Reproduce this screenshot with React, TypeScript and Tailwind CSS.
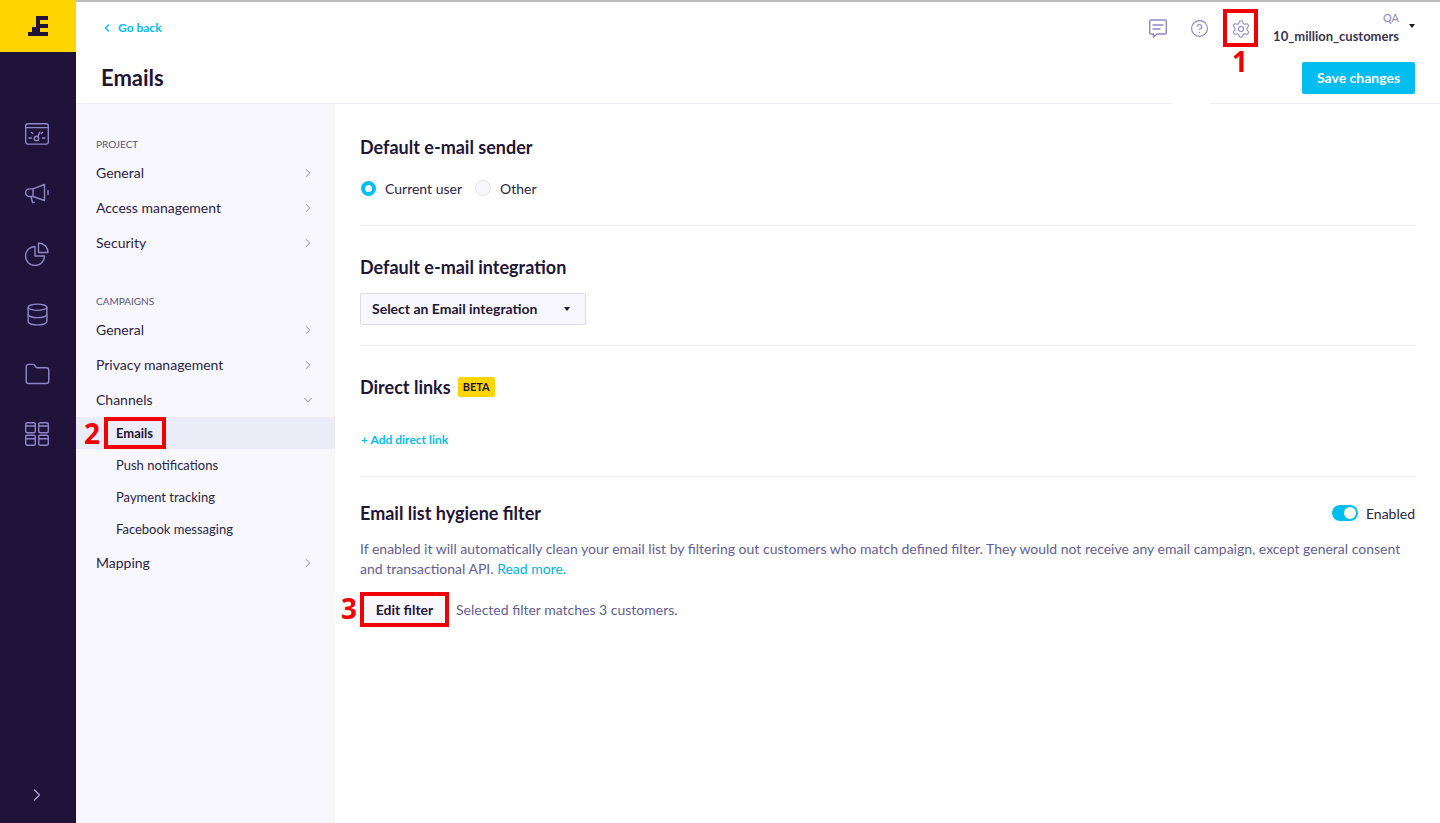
import React from "react";
import { ChevronRight, ChevronDown, ChevronLeft, CircleHelp, Settings, Database, Folder } from "lucide-react";

const RailIcon = ({ children }: { children: React.ReactNode }) => (
  <div className="h-[60px] flex items-center justify-center pr-[2px] text-[#8d86c9]">{children}</div>
);

const NavRow = ({ label, open }: { label: string; open?: boolean }) => (
  <div className="h-[35px] flex items-center justify-between pl-5 pr-[20px] text-[14px] text-[#2b2444]">
    <span>{label}</span>
    {open ? <ChevronDown size={14} strokeWidth={1.8} className="text-[#9a95c4] mt-[1px]" /> : <ChevronRight size={14} strokeWidth={1.8} className="text-[#9a95c4] mt-[1px]" />}
  </div>
);

const SubRow = ({ label }: { label: string }) => (
  <div className="h-8 flex items-center pl-10 pt-[2px] text-[13px] text-[#2b2444]">{label}</div>
);

const Mark = ({ n, className }: { n: string; className: string }) => (
  <span className={`absolute text-[#f00000] font-bold text-[28px] leading-none font-['Open_Sans',sans-serif] ${className}`}>{n}</span>
);

const Section = ({ children, last }: { children: React.ReactNode; last?: boolean }) => (
  <section className={last ? "" : "border-b border-[#e9e8f3]"}>{children}</section>
);

const H2 = ({ children }: { children: React.ReactNode }) => (
  <h2 className="text-[18px] font-bold leading-[24px] text-[#1f1534]">{children}</h2>
);

export default function App() {
  return (
    <div className="w-[1440px] h-[823px] overflow-hidden flex flex-col bg-white font-['Lato',sans-serif] text-[#1f1534]">
      <div className="h-[2px] bg-[#bdbdbd] shrink-0 ml-[76px]" />
      <div className="flex-1 flex min-h-0 -mt-[2px]">
        <aside className="w-[76px] shrink-0 bg-[#20133a] flex flex-col">
          <div className="h-[52px] bg-[#ffd500] flex items-center justify-center">
            <svg width="20" height="20" viewBox="0 0 20 20" fill="#20133a">
              <rect x="8" y="0" width="12" height="4" />
              <rect x="8" y="0" width="4" height="16" />
              <rect x="8" y="8" width="12" height="4" />
              <rect x="4" y="11" width="8" height="5" />
              <rect x="0" y="16" width="20" height="4" />
            </svg>
          </div>
          <div className="pt-[52px] flex flex-col">
            <RailIcon>
              <svg width="24" height="22" viewBox="0 0 24 22" fill="none" stroke="currentColor" strokeWidth="1.4" strokeLinecap="round">
                <rect x="0.7" y="0.7" width="22.6" height="20.4" rx="2" />
                <path d="M0.7 4.6h22.6M4 15h2.5M17.5 15h2.5M6.5 9.5l1.3 1M17.5 9.5l-1.3 1" />
                <circle cx="11.5" cy="15.4" r="2.2" />
                <path d="M12.8 13.6l2-4.4" />
              </svg>
            </RailIcon>
            <RailIcon>
              <svg width="24" height="22" viewBox="0 0 24 22" fill="none" stroke="currentColor" strokeWidth="1.4" strokeLinecap="round" strokeLinejoin="round">
                <path d="M19.5 1.5v16L8 13.5H4.5a3.8 3.8 0 0 1 0-7.600H8z" />
                <path d="M8 5.9v7.6M6 13.7l1.5 6 1.8-.6M23 7.5v4" />
              </svg>
            </RailIcon>
            <RailIcon>
              <svg width="24" height="24" viewBox="0 0 24 24" fill="none" stroke="currentColor" strokeWidth="1.4" strokeLinejoin="round">
                <path d="M10 4.5a9.5 9.5 0 1 0 9.5 9.5H10z" />
                <path d="M13.5 1a9.5 9.5 0 0 1 9.5 9.5h-9.5z" />
              </svg>
            </RailIcon>
            <RailIcon><Database size={25} strokeWidth={1.35} /></RailIcon>
            <RailIcon><Folder size={27} strokeWidth={1.3} /></RailIcon>
            <RailIcon>
              <svg width="24" height="24" viewBox="0 0 24 24" fill="none" stroke="currentColor" strokeWidth="1.4">
                <rect x="0.7" y="0.7" width="9.6" height="10" rx="1.5" />
                <rect x="13.7" y="0.7" width="9.6" height="10" rx="1.5" />
                <rect x="0.7" y="13.3" width="9.6" height="10" rx="1.5" />
                <rect x="13.7" y="13.3" width="9.6" height="10" rx="1.5" />
                <path d="M0.7 4h9.6M13.7 4h9.6M0.7 16.7h9.6M13.7 16.7h9.6" />
              </svg>
            </RailIcon>
          </div>
          <div className="mt-auto h-[56px] flex items-center justify-center pr-[2px] text-[#a9a4d6]">
            <ChevronRight size={20} strokeWidth={1.5} />
          </div>
        </aside>

        <div className="flex-1 min-w-0 flex flex-col">
          <header className="relative h-[104px] shrink-0 border-b border-[#f0eff7] flex justify-between pl-[25px] pr-[25px]">
            <div className="flex flex-col">
              <div className="h-[55px] flex items-center gap-[5px] text-[12px] font-bold text-[#00bdf0] pt-[1px]">
                <ChevronLeft size={12} strokeWidth={3} />
                <span>Go back</span>
              </div>
              <h1 className="text-[22px] font-bold leading-[28px] text-[#1f1534] mt-[9px]">Emails</h1>
            </div>
            <div className="flex flex-col items-end">
              <div className="flex items-start h-[62px]">
                <div className="mt-[19px] w-[22px] flex justify-center text-[#8d86c9]">
                  <svg width="18" height="20" viewBox="0 0 18 20" fill="none" stroke="currentColor" strokeWidth="1.4" strokeLinejoin="round" strokeLinecap="round">
                    <path d="M2 1h14a1.3 1.3 0 0 1 1.3 1.3v11.400a1.3 1.3 0 0 1-1.3 1.3H8l-3.500 3v-3H2a1.3 1.3 0 0 1-1.3-1.3V2.300A1.3 1.3 0 0 1 2 1z" />
                    <path d="M4 6h10M4 10h7" />
                  </svg>
                </div>
                <div className="ml-[19px] mt-[19px] w-[22px] flex justify-center text-[#8d86c9]"><CircleHelp size={19} strokeWidth={1.5} /></div>
                <div className="relative ml-[13px] mt-[9px] w-[35px] h-[38px] border-[4px] border-[#f00000] flex items-center justify-center pt-[1px] text-[#8d86c9]">
                  <Settings size={20} strokeWidth={1.3} />
                  <Mark n="1" className="left-[5px] top-[34px]" />
                </div>
                <div className="ml-[15px] mt-[11px] flex flex-col items-end">
                  <span className="text-[11px] leading-[14px] text-[#8d86c9]">QA</span>
                  <span className="text-[13px] font-bold leading-[18px] text-[#3a3450] mt-[2px]">10_million_customers</span>
                </div>
                <div className="ml-[10px] mt-[24px] w-0 h-0 border-x-[3.5px] border-x-transparent border-t-[4px] border-t-[#1f1534]" />
              </div>
              <button className="h-[32px] w-[113px] rounded-[2px] bg-[#00bdf0] text-white text-[14px] font-bold pb-[2px]">Save changes</button>
            </div>
            <div className="absolute left-[1096px] top-[101px] w-[38px] h-[3px] bg-white" />
          </header>

          <div className="flex-1 flex min-h-0">
            <nav className="w-[259px] shrink-0 bg-[#f8f7fe] pt-[32px]">
              <div className="pl-5 text-[10px] leading-4 text-[#5a5378] uppercase mb-[3px]">Project</div>
              <NavRow label="General" />
              <NavRow label="Access management" />
              <NavRow label="Security" />
              <div className="pl-5 text-[10px] leading-4 text-[#5a5378] uppercase mt-[33px] mb-[3px]">Campaigns</div>
              <NavRow label="General" />
              <NavRow label="Privacy management" />
              <NavRow label="Channels" open />
              <div className="h-8 bg-[#eaecf8] flex items-center pl-[28px]">
                <div className="relative h-[32px] w-[62px] border-[4px] border-[#f00000] flex items-center pl-[8px] pt-[2px] text-[13px] font-bold text-[#1f1534]">
                  Emails
                  <Mark n="2" className="-left-[24px] top-[-2px]" />
                </div>
              </div>
              <SubRow label="Push notifications" />
              <SubRow label="Payment tracking" />
              <SubRow label="Facebook messaging" />
              <NavRow label="Mapping" />
            </nav>

            <main className="flex-1 min-w-0 pl-[25px] pr-[25px]">
              <Section>
                <div className="h-[121px] pt-[31px]">
                  <H2>Default e-mail sender</H2>
                  <div className="flex items-center h-5 mt-[19px] pl-[1px] text-[14px] text-[#2b2444]">
                    <span className="w-[15px] h-[15px] rounded-full border-[4px] border-[#00bdf0] bg-white" />
                    <span className="ml-[9px]">Current user</span>
                    <span className="ml-[13px] w-[16px] h-[16px] rounded-full border border-[#e3e2f0] bg-[#f8f7fe]" />
                    <span className="ml-[9px]">Other</span>
                  </div>
                </div>
              </Section>
              <Section>
                <div className="h-[119px] pt-[29px]">
                  <H2>Default e-mail integration</H2>
                  <div className="mt-[14px] w-[226px] h-[32px] rounded-[2px] border border-[#dcdbec] bg-[#f8f7fe] flex items-center justify-between pl-[11px] pr-[15px] pb-[2px] text-[14px] font-bold text-[#1f1534]">
                    <span>Select an Email integration</span>
                    <span className="w-0 h-0 mt-[2px] border-x-[3.5px] border-x-transparent border-t-[4px] border-t-[#1f1534]" />
                  </div>
                </div>
              </Section>
              <Section>
                <div className="h-[130px] pt-[29px]">
                  <div className="flex items-center gap-[7px]">
                    <H2>Direct links</H2>
                    <span className="h-[20px] px-[5px] rounded-[2px] bg-[#ffd500] text-[11px] font-bold leading-[20px] text-[#1f1534]">BETA</span>
                  </div>
                  <div className="mt-[32px] pl-[1px] text-[12px] font-bold leading-[18px] text-[#00bdf0]">+ Add direct link</div>
                </div>
              </Section>
              <Section last>
                <div className="pt-[24px]">
                  <div className="flex items-center justify-between h-[24px]">
                    <H2>Email list hygiene filter</H2>
                    <div className="flex items-center gap-[8px] text-[14px] text-[#2b2444]">
                      <span className="w-[26px] h-[16px] rounded-full bg-[#00bdf0] flex items-center justify-end pr-[2px]">
                        <span className="w-[12px] h-[12px] rounded-full bg-white" />
                      </span>
                      Enabled
                    </div>
                  </div>
                  <p className="mt-[14px] text-[14px] leading-[20px] text-[#655e93]">
                    If enabled it will automatically clean your email list by filtering out customers who match defined filter. They would not receive any email campaign, except general consent and transactional API. <span className="text-[#00b2e3]">Read more.</span>
                  </p>
                  <div className="mt-[13px] flex items-center">
                    <div className="relative w-[89px] h-[35px] border-[4px] border-[#f00000] bg-[#f8f7fe] flex items-center justify-center pb-[1px] text-[14px] font-bold text-[#1f1534]">
                      Edit filter
                      <Mark n="3" className="-left-[23px] top-[-2px]" />
                    </div>
                    <span className="ml-[7px] text-[14px] text-[#655e93]">Selected filter matches 3 customers.</span>
                  </div>
                </div>
              </Section>
            </main>
          </div>
        </div>
      </div>
    </div>
  );
}
